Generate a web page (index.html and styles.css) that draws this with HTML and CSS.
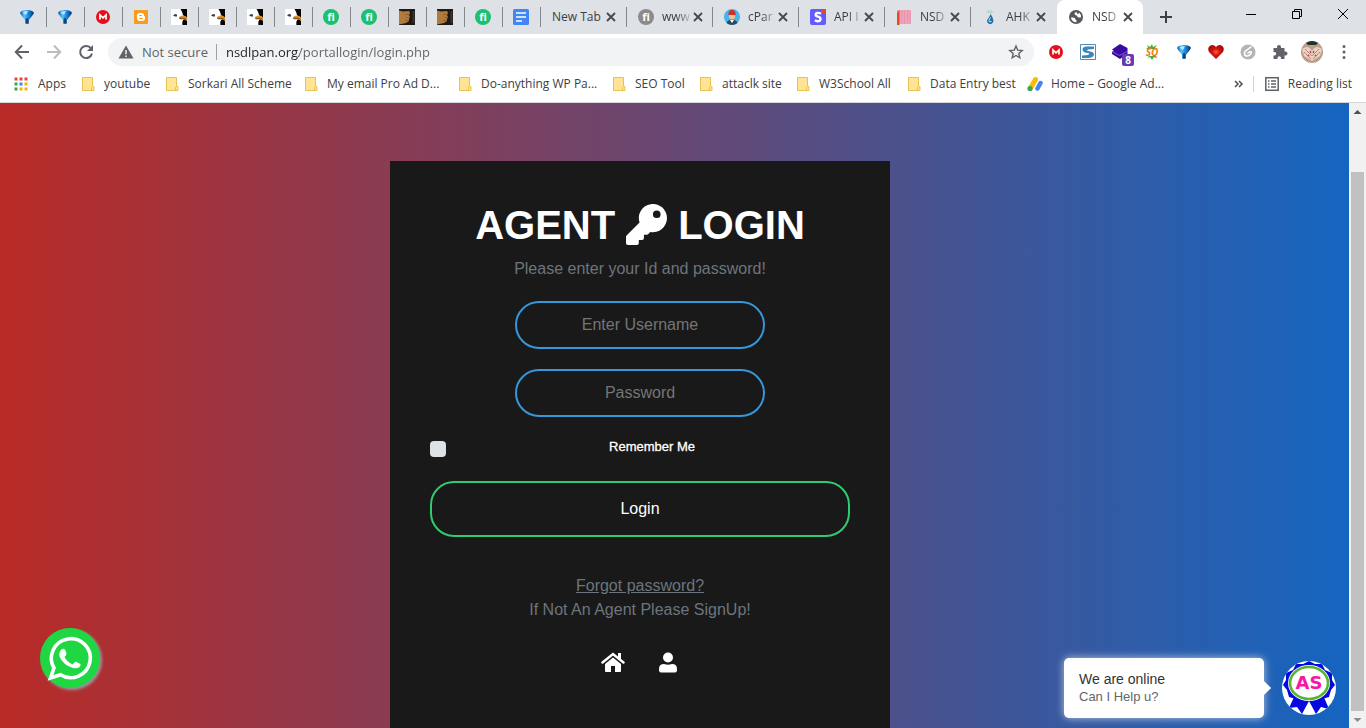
FILE: index.html
```html
<!DOCTYPE html>
<html lang="en">
<head>
<meta charset="utf-8">
<title>NSDL PAN</title>
<link rel="stylesheet" href="styles.css">
</head>
<body>
<svg class="sprites" aria-hidden="true">
  <defs>
    <linearGradient id="blue" x1="0" x2="1"><stop offset="0" stop-color="#0b4fa8"/><stop offset=".3" stop-color="#58c4fb"/><stop offset=".6" stop-color="#1b86e0"/><stop offset="1" stop-color="#06306e"/></linearGradient>
    <radialGradient id="red"><stop offset="0" stop-color="#ff6a1a"/><stop offset=".45" stop-color="#d81414"/><stop offset="1" stop-color="#a80c10"/></radialGradient>
  </defs>
  <symbol id="gem" viewBox="0 0 16 16"><path d="M1 4Q1 2.500 4 1.500Q8 .500 12 1.500Q15 2.500 15 4Q14 6 9.800 11V14.500Q8 15.500 6.200 14.500V11Q2 6 1 4Z" fill="url(#blue)"/><path d="M6.500 10.500L8 8.500L9.500 10.500V14.500H6.500Z" fill="#05274f" opacity=".75"/><path d="M3.500 3.500Q6 1.500 9 2L7 6Z" fill="#d4f4ff" opacity=".8"/></symbol>
  <symbol id="mega" viewBox="0 0 16 16"><circle cx="8" cy="8" r="7" fill="#e3101a"/><path d="M5 10.500V6L8 8.800L11 6V10.500" fill="none" stroke="#fff" stroke-width="1.700"/></symbol>
  <symbol id="blogger" viewBox="0 0 16 16"><rect x="1" y="1" width="14" height="14" rx="1" fill="#f99c1c"/><path d="M6.500 4H8.800A2.200 2.200 0 0 1 11 6.200V6.700Q11 7.300 11.600 7.300Q12 7.300 12 8V9.600A2.400 2.400 0 0 1 9.600 12H6.400A2.400 2.400 0 0 1 4 9.600V6.500A2.500 2.500 0 0 1 6.500 4Z" fill="#fff"/><path d="M6.600 6.500H8.400M6.600 9.500H9.500" stroke="#f99c1c" stroke-width="1.200" stroke-linecap="round"/></symbol>
  <symbol id="bird" viewBox="0 0 16 16"><path fill="#fff" d="M0 0H16V16H0Z"/><path d="M9.500 0H16V16H11.500L12 11L15 9L12 6Q11.500 3 9.500 0Z" fill="#050505"/><path d="M2 6.500L4 5L6 5.500L6 7.500L4 7.500Z" fill="#3a3f42"/><path d="M8 8L11 6.500Q15 6.500 16 8.500V12L13.500 10.500H9Z" fill="#e0912e"/><path d="M8 9.300H13.500L15.500 10.500" stroke="#5c3c1a" stroke-width=".8" fill="none"/><path d="M11.500 12L14 12.500L11.500 16Z" fill="#050505"/></symbol>
  <symbol id="fi" viewBox="0 0 16 16"><circle cx="8" cy="8" r="8" fill="#1dbf73"/><text x="8" y="12" text-anchor="middle" class="fi-text">fi</text></symbol>
  <symbol id="figray" viewBox="0 0 16 16"><circle cx="8" cy="8" r="8" fill="#8b8b8b"/><text x="8" y="12" text-anchor="middle" class="fi-text">fi</text></symbol>
  <symbol id="fist" viewBox="0 0 16 16"><path fill="#1d1916" d="M0 0H16V16H0Z"/><path d="M0 1.500L4 2.500L10 2L11 4L10 6L11 8L10 10L10 12L7 14L0 15.500Z" fill="#b07a3e"/><path d="M6 5.500H10.500M7 8.500H11M6 11.500H10" stroke="#7d521f" stroke-width=".6"/><path d="M14.500 2V14" stroke="#3b3532" stroke-width="2"/></symbol>
  <symbol id="doc" viewBox="0 0 16 16"><rect width="16" height="16" rx="1.500" fill="#4285f4"/><path d="M3 4H13M3 8H13M3 12H9" stroke="#fff" stroke-width="1.700"/></symbol>
  <symbol id="person" viewBox="0 0 16 16"><circle cx="8" cy="8" r="8" fill="#43b5ea"/><path d="M2.500 14Q4 10.500 8 10.500T13.500 14Q8 18 2.500 14Z" fill="#30475c"/><circle cx="8" cy="7.500" r="3" fill="#efc19b"/><path d="M4.500 6Q4 1 8 1T11.500 6Z" fill="#d42b2b"/><path d="M6 11L8 14L10 11Z" fill="#fff"/></symbol>
  <symbol id="stack" viewBox="0 0 16 16"><rect width="16" height="16" rx="2" fill="#635bff"/><path d="M11 4.800Q9.500 3.800 7.800 3.900Q5.600 4.100 5.700 5.800Q5.700 7.100 8 7.700Q10.800 8.300 10.500 10.200Q10.200 12.200 7.800 12.200Q6.200 12.200 4.800 11.300" fill="none" stroke="#fff" stroke-width="2.400"/><circle cx="14" cy="2" r="2.500" fill="#dd4b2a"/></symbol>
  <symbol id="bars" viewBox="0 0 16 16"><path d="M1 1H15V15H1Z" fill="#f0a3b8"/><path d="M1 3.500L3.500 1V16H1Z" fill="#e64a27"/><path d="M6 1V14M8.500 2V15M11.500 1V13M14 2V15" stroke="#e48fab" stroke-width=".8"/></symbol>
  <symbol id="drop" viewBox="0 0 16 16"><path d="M4.500 3Q8 0 11.500 3M6 4Q8 2.500 10 4" stroke="#a9d4bd" fill="none"/><path d="M8.500 5Q12.500 10 11 13.500Q8 17 5.500 13.500Q4 11 7 8.500Z" fill="#1f6fa5"/><path d="M8.500 8.500L6.800 11.500Q7 13.500 9.500 12.500" stroke="#d2efff" fill="none"/></symbol>
  <symbol id="globe" viewBox="0 0 16 16"><circle cx="8" cy="8" r="7" fill="#54575b"/><path d="M2.800 8.500H5Q7.500 8.500 7.500 10.500Q9 11 8.500 13.300Q4 13.500 2.800 8.500ZM8.500 3Q6 3.500 6.500 5Q7 6.500 9 6.500Q9 8.500 11 8.500H13Q13.500 5.500 11 3.500Q11 5 9.500 5Z" fill="#fff"/></symbol>
  <symbol id="close" viewBox="0 0 16 16"><path d="M4 4L12 12M12 4L4 12" stroke="#45484c" stroke-width="1.800"/></symbol>
  <symbol id="folder" viewBox="0 0 14 16"><path d="M.500 1.500H10.500V10.500H12V14.500H.500Z" fill="#ffe494" stroke="#e8c252"/><path d="M9.500 14V11" stroke="#e8c252"/></symbol>
  <symbol id="reading" viewBox="0 0 16 16"><path d="M1.800 1.800H14.200V14.200H1.800Z" fill="none" stroke="#5f6368" stroke-width="1.500"/><path d="M4 5H5.500M4 8H5.500M4 11H5.500M7 5H12M7 8H12M7 11H12" stroke="#5f6368" stroke-width="1.400"/></symbol>
</svg>

<header class="browser">
  <div class="tabstrip">
    <nav class="tabs" aria-label="Tabs">
      <button class="pin" aria-label="Tab 1"><svg><use href="#gem"/></svg></button>
      <button class="pin" aria-label="Tab 2"><svg><use href="#gem"/></svg></button>
      <button class="pin" aria-label="Tab 3"><svg><use href="#mega"/></svg></button>
      <button class="pin" aria-label="Tab 4"><svg><use href="#blogger"/></svg></button>
      <button class="pin" aria-label="Tab 5"><svg><use href="#bird"/></svg></button>
      <button class="pin" aria-label="Tab 6"><svg><use href="#bird"/></svg></button>
      <button class="pin" aria-label="Tab 7"><svg><use href="#bird"/></svg></button>
      <button class="pin" aria-label="Tab 8"><svg><use href="#bird"/></svg></button>
      <button class="pin" aria-label="Tab 9"><svg><use href="#fi"/></svg></button>
      <button class="pin" aria-label="Tab 10"><svg><use href="#fi"/></svg></button>
      <button class="pin" aria-label="Tab 11"><svg><use href="#fist"/></svg></button>
      <button class="pin" aria-label="Tab 12"><svg><use href="#fist"/></svg></button>
      <button class="pin" aria-label="Tab 13"><svg><use href="#fi"/></svg></button>
      <button class="pin" aria-label="Tab 14"><svg><use href="#doc"/></svg></button>
      <div class="tab"><span class="tab-title tab-title-full">New Tab</span><button aria-label="Close tab"><svg><use href="#close"/></svg></button></div>
      <div class="tab"><svg><use href="#figray"/></svg><span class="tab-title">www</span><button aria-label="Close tab"><svg><use href="#close"/></svg></button></div>
      <div class="tab"><svg><use href="#person"/></svg><span class="tab-title">cPar</span><button aria-label="Close tab"><svg><use href="#close"/></svg></button></div>
      <div class="tab"><svg><use href="#stack"/></svg><span class="tab-title">API I</span><button aria-label="Close tab"><svg><use href="#close"/></svg></button></div>
      <div class="tab"><svg><use href="#bars"/></svg><span class="tab-title">NSD</span><button aria-label="Close tab"><svg><use href="#close"/></svg></button></div>
      <div class="tab tab-last"><svg><use href="#drop"/></svg><span class="tab-title">AHK</span><button aria-label="Close tab"><svg><use href="#close"/></svg></button></div>
      <div class="tab tab-active"><svg><use href="#globe"/></svg><span class="tab-title">NSD</span><button aria-label="Close tab"><svg><use href="#close"/></svg></button></div>
      <button class="new-tab" aria-label="New tab"><svg viewBox="0 0 16 16"><path d="M8 2V14M2 8H14" stroke="#3c4043" stroke-width="2"/></svg></button>
    </nav>
    <div class="window-controls">
      <button aria-label="Minimize"><svg viewBox="0 0 12 12"><path d="M1 6.500H11" stroke="#000"/></svg></button>
      <button aria-label="Restore"><svg viewBox="0 0 12 12"><path d="M1.500 3.500H8.500V10.500H1.500ZM3.500 3.500V1.500H10.500V8.500H8.500" fill="none" stroke="#000"/></svg></button>
      <button aria-label="Close window"><svg viewBox="0 0 12 12"><path d="M1 1L11 11M11 1L1 11" stroke="#000"/></svg></button>
    </div>
  </div>

  <div class="toolbar">
    <div class="nav-buttons">
      <button aria-label="Back"><svg viewBox="0 0 16 16"><path d="M15 8H2M8 1.500L1.800 8L8 14.500" fill="none" stroke="#5f6368" stroke-width="2"/></svg></button>
      <button aria-label="Forward"><svg viewBox="0 0 16 16"><path d="M1 8H14M8 1.500L14.200 8L8 14.500" fill="none" stroke="#babcbe" stroke-width="2"/></svg></button>
      <button aria-label="Reload"><svg viewBox="0 0 16 16"><path d="M13 4.500A6 6 0 1 0 14 9.500" fill="none" stroke="#5f6368" stroke-width="2"/><path d="M15 1V7H9Z" fill="#5f6368"/></svg></button>
    </div>
    <div class="omnibox">
      <svg class="warning" viewBox="0 0 16 16"><path d="M8 1.500L15.500 14.500H.5Z" fill="#5f6368"/><path d="M8 6V10.300M8 11.400V13" stroke="#f1f3f4" stroke-width="1.500"/></svg>
      <span class="security">Not secure</span>
      <input class="url" type="text" aria-label="Address" value="nsdlpan.org/portallogin/login.php">
      <button aria-label="Bookmark this page"><svg viewBox="0 0 16 16"><path d="M8 2L9.700 6.100L14.200 6.500L10.800 9.400L11.800 13.800L8 11.500L4.200 13.800L5.200 9.400L1.800 6.500L6.300 6.100Z" fill="none" stroke="#5f6368" stroke-width="1.400"/></svg></button>
    </div>
    <div class="extensions">
      <button aria-label="Mega"><svg><use href="#mega"/></svg></button>
      <button aria-label="S extension"><svg viewBox="0 0 16 16"><path d="M.500.500H15.500V15.500H.500Z" fill="#fff" stroke="#4e8cba"/><path d="M14 2.500H6Q2 3 2.500 6Q3 8.500 8 9Q10.500 9.500 8 11L2 11.500V14H9Q14 13.500 14 10Q13.500 7.500 8 7Q6 6.500 8 5.500L14 5Z" fill="#3f86b8"/></svg></button>
      <button class="badged" aria-label="Stack extension"><svg viewBox="0 0 16 16"><path d="M8 0L15.500 4V10L8 15L0 10V8L2 7L0 5.500Z" fill="#3b0aa0"/><path d="M0 7.500L7.500 11.500L15 7.500" fill="none" stroke="#8c6bd0" stroke-width=".8"/></svg><span class="badge">8</span></button>
      <button aria-label="SEOquake"><svg viewBox="0 0 16 16"><path d="M3 1L6 3L8 0L9 3L13 1L11 4L15 5H2L4 3.500ZM3 14L5 12H12L13 14L10 13L8 16L6 13Z" fill="#51ad32"/><text x="8" y="12" text-anchor="middle" class="seo-text">SQ</text></svg></button>
      <button aria-label="Gem extension"><svg><use href="#gem"/></svg></button>
      <button aria-label="Heart extension"><svg viewBox="0 0 16 16"><path d="M8 15L1 8Q-1 4 2 1.700Q5.500 0 8 3Q10.500 0 14 1.700Q17 4 15 8Z" fill="url(#red)"/></svg></button>
      <button aria-label="Clip extension"><svg viewBox="0 0 16 16"><circle cx="8" cy="8" r="7.500" fill="#b4b4b4"/><path d="M11.500 2.500L5 7.500Q3.500 10.500 6 12Q10 12.500 11.500 8.500Q11 6.500 7.500 9.500" fill="none" stroke="#fff" stroke-width="1.500"/></svg></button>
      <button aria-label="Extensions"><svg viewBox="0 0 16 16"><path d="M1.500 4H5V3A2 2 0 0 1 9 3V4H12.500V7.500H13.500A2 2 0 0 1 13.500 11.500H12.500V15H9V14A1.700 1.700 0 0 0 5.500 14V15H1.500V11.500H2.500A1.700 1.700 0 0 0 2.500 8H1.500Z" fill="#5f6368"/></svg></button>
      <button aria-label="Profile"><svg class="avatar" viewBox="0 0 22 22"><circle cx="11" cy="11" r="11" fill="#b9a08a"/><path d="M5 2Q11-2 17 2L15 4H7Z" fill="#25312c"/><path d="M1 8L5 6Q9 6 11 10Q13 6 17 6L21 8L19 15L11 20L3 15Z" fill="#ecd0c2"/><path d="M4 8L11 15M3 11L10 18M18 8L11 15M19 11L12 18" stroke="#a4776c" stroke-width=".8" fill="none"/><path d="M9 10L10 12M13 10L12 12M7 14L8 15M15 14L14 15" stroke="#c52c42" stroke-width="1.200"/></svg></button>
      <button aria-label="Menu"><svg viewBox="0 0 16 16"><path d="M8 2.500H8.010M8 8H8.010M8 13.500H8.010" stroke="#5f6368" stroke-width="3" stroke-linecap="round"/></svg></button>
    </div>
  </div>

  <nav class="bookmarks" aria-label="Bookmarks">
    <div class="bookmark-list">
      <a href="#"><svg class="apps" viewBox="0 0 14 14"><path d="M.500 2H3.500M5.500 2H8.500M10.500 2H13.500" stroke="#ea4335" stroke-width="3"/><path d="M.500 7H3.500M.500 12H3.500" stroke="#34a853" stroke-width="3"/><path d="M5.500 7H8.500" stroke="#4285f4" stroke-width="3"/><path d="M10.500 7H13.500M5.500 12H8.500M10.500 12H13.500" stroke="#f4b400" stroke-width="3"/></svg>Apps</a>
      <a href="#"><svg class="folder"><use href="#folder"/></svg>youtube</a>
      <a href="#"><svg class="folder"><use href="#folder"/></svg>Sorkari All Scheme</a>
      <a href="#"><svg class="folder"><use href="#folder"/></svg>My email Pro Ad D...</a>
      <a href="#"><svg class="folder"><use href="#folder"/></svg>Do-anything WP Pa...</a>
      <a href="#"><svg class="folder"><use href="#folder"/></svg>SEO Tool</a>
      <a href="#"><svg class="folder"><use href="#folder"/></svg>attaclk site</a>
      <a href="#"><svg class="folder"><use href="#folder"/></svg>W3School All</a>
      <a href="#"><svg class="folder"><use href="#folder"/></svg>Data Entry best</a>
      <a href="#"><svg viewBox="0 0 16 16"><path d="M8.500 3.500L3.500 12" stroke="#fbbc04" stroke-width="5" stroke-linecap="round"/><path d="M13.500 7L10.500 12.500" stroke="#4285f4" stroke-width="4.500" stroke-linecap="round"/><circle cx="3" cy="12.500" r="2.600" fill="#34a853"/></svg>Home – Google Ad...</a>
    </div>
    <button class="more" aria-label="More bookmarks"><svg viewBox="0 0 10 10"><path d="M1 2L4 5L1 8M5 2L8 5L5 8" fill="none" stroke="#505357" stroke-width="1.600"/></svg></button>
    <button class="reading-list"><svg><use href="#reading"/></svg>Reading list</button>
  </nav>
</header>

<div class="viewport">
  <main class="page">
    <form class="login-box">
      <h1>AGENT <svg class="key" viewBox="0 0 512 512" role="img" aria-label="key"><path fill="#fff" d="M512 176a176 176 0 0 1-209 173l-24 27a24 24 0 0 1-18 8h-37v40a24 24 0 0 1-24 24h-40v40a24 24 0 0 1-24 24H24a24 24 0 0 1-24-24v-78c0-6 3-12 7-17l162-162A176 176 0 1 1 512 176ZM336 128a48 48 0 1 0 96 0 48 48 0 0 0-96 0Z"/></svg> LOGIN</h1>
      <p class="hint">Please enter your Id and password!</p>
      <input class="field" type="text" placeholder="Enter Username" aria-label="Username">
      <input class="field" type="password" placeholder="Password" aria-label="Password">
      <div class="remember">
        <input type="checkbox" id="remember">
        <label for="remember">Remember Me</label>
      </div>
      <button class="submit" type="button">Login</button>
      <div class="help">
        <a href="#">Forgot password?</a>
        <p>If Not An Agent Please SignUp!</p>
      </div>
      <div class="links">
        <a href="#" aria-label="Home"><svg viewBox="0 0 24 21"><path d="M1.500 10.500L12 2L22.500 10.500" fill="none" stroke="#fff" stroke-width="2.400" stroke-linecap="round"/><path d="M17 1H20V8L17 5.500Z" fill="#fff"/><path d="M12 5.500L20 12V19Q20 20 19 20H14V14H10V20H5Q4 20 4 19V12Z" fill="#fff"/></svg></a>
        <a href="#" aria-label="Account"><svg viewBox="0 0 20 21"><circle cx="10" cy="5.500" r="5" fill="#fff"/><path d="M1 18V17Q1 12 6 12Q10 13.500 14 12Q19 12 19 17V18Q19 20.500 17 20.500H3Q1 20.500 1 18Z" fill="#fff"/></svg></a>
      </div>
    </form>
    <a class="whatsapp" href="#" aria-label="WhatsApp"><svg viewBox="0 0 60 60"><path d="M10.500 50L14 40A19.500 19.500 0 1 1 20.500 46.700Z" fill="none" stroke="#fff" stroke-width="3.600"/><path d="M22 21Q24.500 20 25.500 22.500L26.500 25.500Q26.500 27 24.500 29Q27 34 32.500 36.500L35 34Q36 33.500 37.500 34.500L40.500 36Q41 37.500 39.500 39Q37 41 33 40Q23 37 19.500 28.500Q18.500 23.500 22 21Z" fill="#fff"/></svg></a>
    <div class="chat">
      <div class="bubble"><strong>We are online</strong><span>Can I Help u?</span></div>
      <button class="agent" aria-label="Open chat"><svg viewBox="0 0 54 54"><path d="M13 34L7 47L15 46L20 53L27 40L34 53L39 46L47 48L41 34Z" fill="#0608e0"/><path d="M27 0L33 3L40 3L43 9L50 12L50 19L53 24L49 29L47 36L40 38L35 42L27 40L19 42L14 38L7 36L5 29L1 24L4 19L4 12L11 9L14 3L21 3Z" fill="#0608e0"/><ellipse cx="27" cy="22" rx="21" ry="18" fill="#fff"/><ellipse cx="27" cy="22" rx="19" ry="16" fill="#fff" stroke="#59b530" stroke-width="2.600"/><text x="27" y="28" text-anchor="middle" class="agent-text">AS</text></svg></button>
    </div>
  </main>
  <div class="scrollbar" aria-hidden="true">
    <svg viewBox="0 0 17 17"><path d="M4.500 11L8.500 7L12.500 11Z" fill="#505050"/></svg>
    <div class="thumb"></div>
    <svg viewBox="0 0 17 17"><path d="M4.500 7L8.500 11L12.500 7Z" fill="#8b8b8b"/></svg>
  </div>
</div>
</body>
</html>
```

FILE: styles.css
```css
* { box-sizing: border-box; }
body {
  margin: 0;
  height: 100vh;
  display: flex;
  flex-direction: column;
  overflow: hidden;
  font-family: "Liberation Sans", Arial, sans-serif;
}
button { border: 0; padding: 0; background: none; font: inherit; color: inherit; }
svg { display: block; flex: none; width: 16px; height: 16px; }
.sprites { position: absolute; width: 0; height: 0; }
.fi-text { font: bold 11px "Open Sans", sans-serif; fill: #fff; }
.seo-text { font: italic bold 10px "Open Sans", sans-serif; fill: #f47b0b; }

/* Browser frame */
.browser { background: #fff; font: 12px/16px "Open Sans", sans-serif; color: #3c4043; border-bottom: 1px solid #d5d7da; }
.tabstrip { display: flex; justify-content: space-between; height: 34px; padding-left: 9px; background: #dee1e6; }
.tabs { display: flex; align-items: center; }
.pin { width: 38px; height: 20px; padding-left: 10px; border-right: 1px solid #85888c; }
.tab { display: flex; align-items: center; width: 86px; height: 20px; padding: 0 7px 0 11px; border-right: 1px solid #85888c; }
.tab > svg { margin-right: 8px; }
.tab-title { flex: 1; white-space: nowrap; mask-image: linear-gradient(to right, #000 50%, #0003); }
.tab-title-full { mask-image: none; }
.tab-last { border-color: transparent; }
.tab-active { align-self: stretch; height: 34px; border: 0; border-radius: 8px 8px 0 0; background: #fff; }
.new-tab { padding-left: 15px; }
.window-controls { display: flex; }
.window-controls button { display: grid; place-items: center; width: 46px; height: 28px; }
.window-controls svg { width: 12px; height: 12px; }

.toolbar { display: flex; align-items: center; height: 36px; }
.nav-buttons { display: flex; gap: 16px; padding: 0 14px; }
.omnibox { flex: 1; display: flex; align-items: center; height: 28px; padding: 0 10px; border-radius: 14px; background: #f1f3f4; }
.security { margin: 0 9px 0 8px; padding-right: 8px; border-right: 1px solid #9aa0a6; color: #5f6368; font-size: 13px; white-space: nowrap; }
.url {
  flex: 1; border: 0; padding: 0; outline: 0; font: 13px/20px "Open Sans", sans-serif; color: transparent;
  background: linear-gradient(to right, #202124 73px, #5f6368 73px); background-clip: text; -webkit-background-clip: text;
}
.extensions { display: flex; gap: 16px; padding: 0 14px; }
.extensions button { display: flex; align-items: center; justify-content: center; width: 16px; height: 24px; }
.badged { position: relative; }
.badge { position: absolute; left: 10px; top: 14px; width: 12px; height: 12px; border-radius: 2px; background: #673ab7; color: #fff; font: bold 10px/12px "Open Sans", sans-serif; }
.extensions .avatar { width: 22px; height: 22px; }

.bookmarks { display: flex; align-items: center; height: 32px; padding: 0 14px 4px; }
.bookmark-list { flex: 1; display: grid; grid-template-columns: 68px 84px 139px 154px 154px 87px 97px 111px 119px 1fr; }
.bookmarks a { display: flex; align-items: center; gap: 8px; color: inherit; text-decoration: none; white-space: nowrap; }
.bookmarks .apps { width: 14px; height: 14px; margin-right: 2px; }
.bookmarks .folder { width: 14px; }
.more { padding: 0 9px; border-right: 1px solid #d0d2d5; height: 16px; }
.more svg { width: 10px; height: 10px; }
.reading-list { display: flex; align-items: center; gap: 8px; padding-left: 10px; }

/* Page */
.viewport { flex: 1; min-height: 0; display: flex; }
.page { flex: 1; position: relative; display: flex; justify-content: center; padding: 58px 69px 0 0; background: linear-gradient(to right, #b92b27, #1565c0); overflow: hidden; }
.login-box { width: 500px; height: max-content; padding: 40px 40px 80px; background: #191919; text-align: center; font-size: 16px; line-height: 24px; }
.login-box h1 { display: flex; justify-content: center; align-items: center; gap: 11px; margin: 0 0 8px; font-size: 40px; line-height: 48px; color: #fff; }
.key { width: 41px; height: 41px; margin-bottom: 2px; }
.login-box p { margin: 0; color: #6c757d; }
.field { display: block; width: 250px; margin: 20px auto; padding: 10px; border: 2px solid #3498db; border-radius: 24px; outline: 0; background: none; color: #fff; font: 16px/24px "Liberation Sans", Arial, sans-serif; text-align: center; }
.field::placeholder { color: #757575; }
.remember { display: flex; gap: 8px; padding-top: 4px; }
.remember input { appearance: none; width: 16px; height: 16px; margin: 0; border-radius: 4px; background: #dee2e6; }
.remember label { flex: 1; color: #fff; font-size: 13px; line-height: 12px; -webkit-text-stroke: 0.3px #fff; }
.submit { display: block; width: 100%; margin: 24px 0 37px; padding: 14px; border: 2px solid #2ecc71; border-radius: 24px; color: #fff; line-height: 24px; }
.help a { color: #6c757d; }
.links { display: flex; justify-content: center; gap: 31px; padding-top: 30px; }
.links svg { width: 24px; height: 21px; }

.whatsapp { position: absolute; left: 40px; bottom: 40px; width: 60px; height: 60px; border-radius: 50%; background: #1fd742; box-shadow: 2px 2px 3px #999; }
.whatsapp svg { width: 60px; height: 60px; }
.chat { position: absolute; right: 13px; bottom: 10px; display: flex; align-items: center; gap: 18px; }
.bubble { position: relative; display: flex; flex-direction: column; width: 200px; padding: 12px 15px; border-radius: 5px; background: #fff; box-shadow: 0 0 8px #b8c8dc; color: #666; font-size: 13px; line-height: 18px; }
.bubble::after { content: ""; position: absolute; right: -5px; top: 25px; width: 10px; height: 10px; background: #fff; transform: rotate(45deg); }
.bubble strong { font-weight: normal; font-size: 14px; color: #333; }
.agent { width: 54px; height: 54px; border-radius: 50%; background: #fff; overflow: hidden; box-shadow: 0 0 3px #0868cf; }
.agent svg { width: 54px; height: 54px; }
.agent-text { font: bold 18px "DejaVu Sans", sans-serif; fill: #f916a5; }

.scrollbar { display: flex; flex-direction: column; width: 17px; background: #f1f1f1; }
.scrollbar svg { width: 17px; height: 17px; }
.thumb { flex: 1; margin: 52px 2px 0; background: #c1c1c1; }
```
